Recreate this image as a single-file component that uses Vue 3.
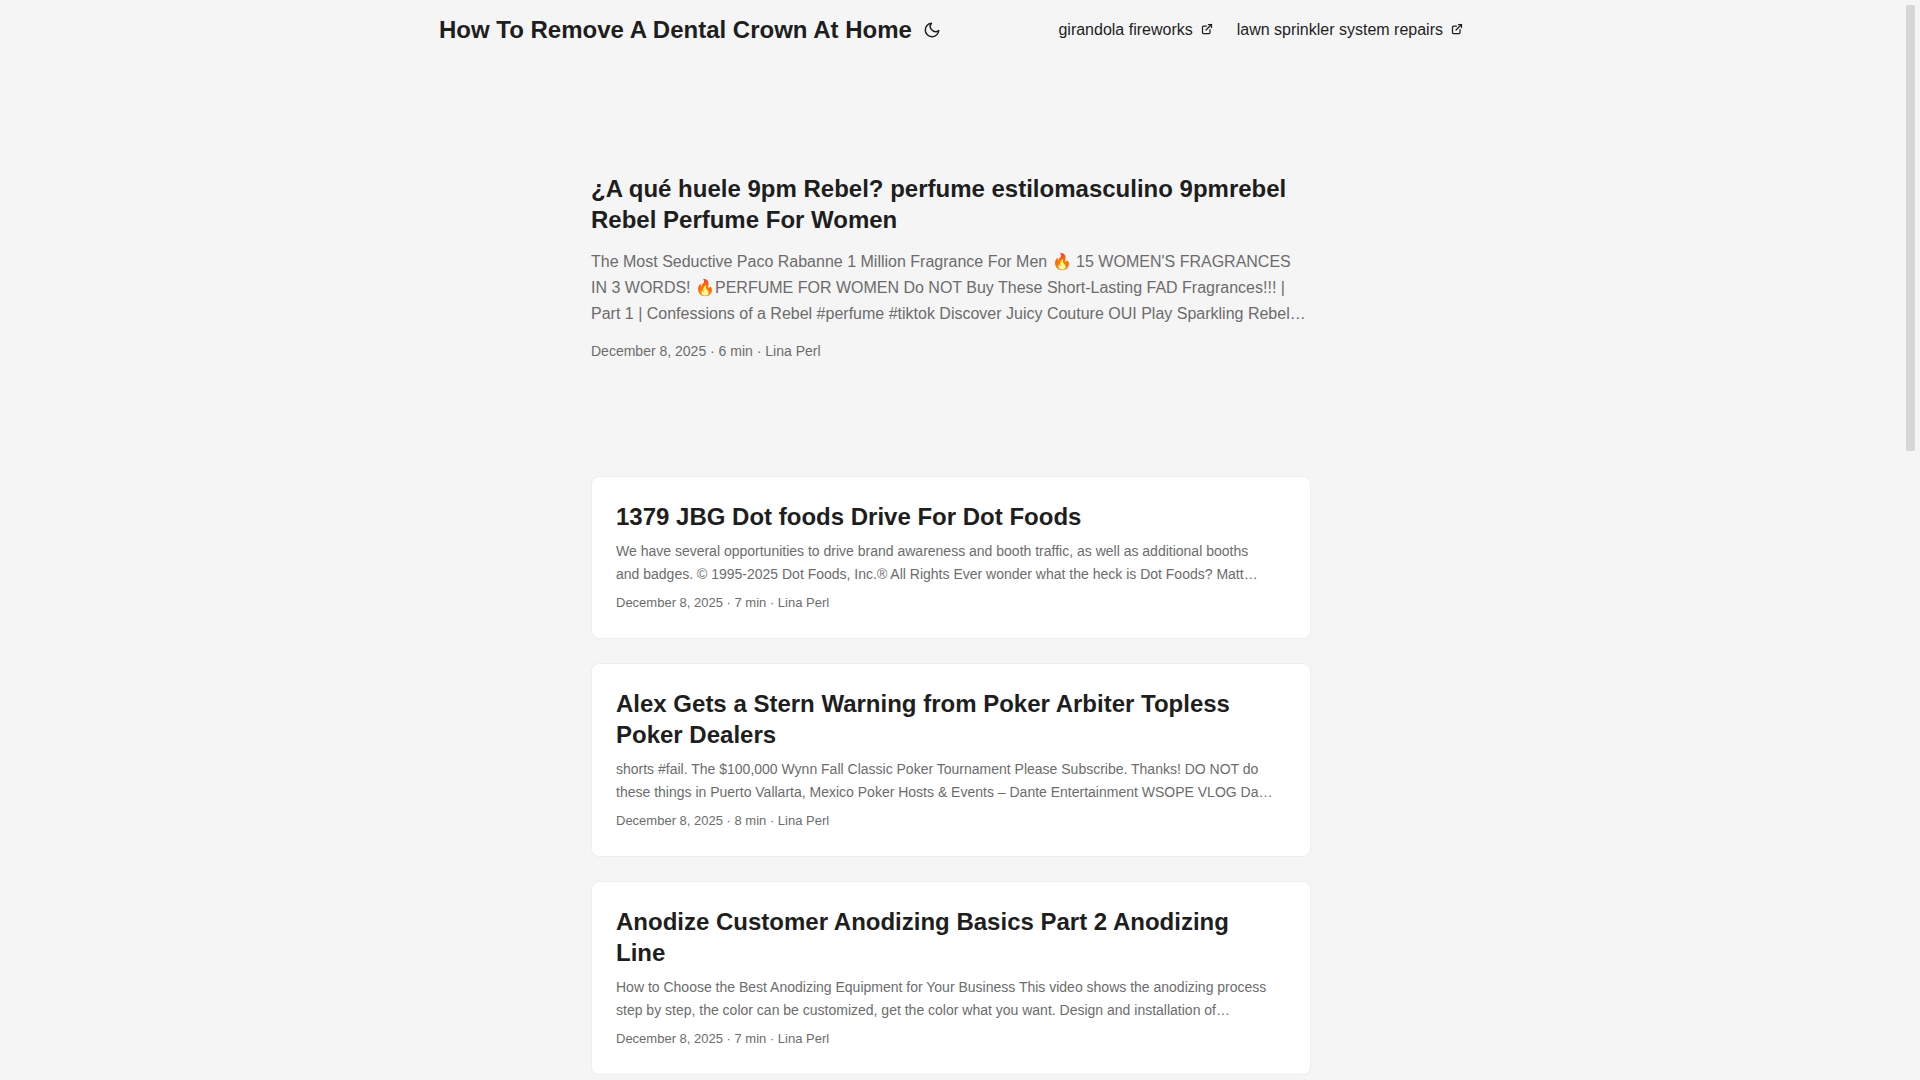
<script setup>
const menu = ['girandola fireworks', 'lawn sprinkler system repairs']

const featured = {
  title: '¿A qué huele 9pm Rebel? perfume estilomasculino 9pmrebel Rebel Perfume For Women',
  summary:
    "The Most Seductive Paco Rabanne 1 Million Fragrance For Men 🔥 15 WOMEN'S FRAGRANCES IN 3 WORDS! 🔥PERFUME FOR WOMEN Do NOT Buy These Short-Lasting FAD Fragrances!!! | Part 1 | Confessions of a Rebel #perfume #tiktok Discover Juicy Couture OUI Play Sparkling Rebel…",
  meta: 'December 8, 2025 · 6 min · Lina Perl',
}

const posts = [
  {
    title: '1379 JBG Dot foods Drive For Dot Foods',
    summary:
      'We have several opportunities to drive brand awareness and booth traffic, as well as additional booths\nand badges. © 1995-2025 Dot Foods, Inc.® All Rights Ever wonder what the heck is Dot Foods? Matt…',
    meta: 'December 8, 2025 · 7 min · Lina Perl',
  },
  {
    title: 'Alex Gets a Stern Warning from Poker Arbiter Topless Poker Dealers',
    summary:
      'shorts #fail. The $100,000 Wynn Fall Classic Poker Tournament Please Subscribe. Thanks! DO NOT do\nthese things in Puerto Vallarta, Mexico Poker Hosts & Events – Dante Entertainment WSOPE VLOG Da…',
    meta: 'December 8, 2025 · 8 min · Lina Perl',
  },
  {
    title: 'Anodize Customer Anodizing Basics Part 2 Anodizing\nLine',
    summary:
      'How to Choose the Best Anodizing Equipment for Your Business This video shows the anodizing process\nstep by step, the color can be customized, get the color what you want. Design and installation of…',
    meta: 'December 8, 2025 · 7 min · Lina Perl',
  },
]
</script>

<template>
  <div class="page">
    <header class="header">
      <nav class="nav">
        <div class="logo">
          <a href="#">How To Remove A Dental Crown At Home</a>
          <button type="button" class="theme-toggle" aria-label="Toggle theme">
            <svg width="24" height="18" viewBox="0 0 24 24" fill="none" stroke="currentColor" stroke-width="2" stroke-linecap="round" stroke-linejoin="round">
              <path d="M21 12.79A9 9 0 1 1 11.21 3 7 7 0 0 0 21 12.79z" />
            </svg>
          </button>
        </div>
        <ul class="menu">
          <li v-for="item in menu" :key="item">
            <a href="#">
              <span>{{ item }}</span>
              <svg width="12" height="12" viewBox="0 0 24 24" fill="none" stroke="currentColor" stroke-width="2.5" stroke-linecap="round" stroke-linejoin="round">
                <path d="M18 13v6a2 2 0 0 1-2 2H5a2 2 0 0 1-2-2V8a2 2 0 0 1 2-2h6" />
                <path d="M15 3h6v6" />
                <path d="M10 14L21 3" />
              </svg>
            </a>
          </li>
        </ul>
      </nav>
    </header>

    <main class="main">
      <article class="featured">
        <h1 class="title">{{ featured.title }}</h1>
        <p class="summary">{{ featured.summary }}</p>
        <footer class="meta">{{ featured.meta }}</footer>
      </article>

      <article v-for="post in posts" :key="post.title" class="card">
        <h2 class="title">{{ post.title }}</h2>
        <p class="summary">{{ post.summary }}</p>
        <footer class="meta">{{ post.meta }}</footer>
      </article>
    </main>

    <div class="scroll-thumb" aria-hidden="true"></div>
  </div>
</template>

<style>
body {
  background: #f5f5f5;
}
</style>

<style scoped>
.page {
  box-sizing: border-box;
  min-height: 100vh;
  padding-right: 18px;
  background: #f5f5f5;
  color: #1e1e1e;
  font-family: "Liberation Sans", Arial, sans-serif;
  font-size: 16px;
  text-rendering: optimizeLegibility;
}

a {
  color: inherit;
  text-decoration: none;
}

.nav {
  display: flex;
  justify-content: space-between;
  max-width: 1024px;
  margin: 0 auto;
  padding: 0 24px;
  line-height: 60px;
}

.logo {
  display: flex;
  align-items: center;
  font-size: 24px;
  font-weight: 700;
}

.theme-toggle {
  display: flex;
  margin: 0 8px;
  padding: 0;
  border: 0;
  background: none;
  color: inherit;
  cursor: pointer;
}

.menu {
  display: flex;
  gap: 24px;
  margin: 0;
  padding: 0;
  list-style: none;
}

.menu a {
  display: flex;
  align-items: center;
  gap: 8px;
}

.menu svg {
  margin-bottom: 2px;
}

.main {
  max-width: 720px;
  margin: 0 auto;
  padding: 24px 24px 0;
}

.featured {
  display: flex;
  flex-direction: column;
  justify-content: center;
  min-height: 320px;
  margin: 24px 0 48px;
}

.title {
  margin: 0;
  font-size: 24px;
  font-weight: 700;
  line-height: 31px;
  white-space: pre-line;
}

.summary {
  margin: 8px 0 6px;
  color: #6c6c6c;
  font-size: 14px;
  line-height: 23px;
  white-space: pre-line;
}

.meta {
  color: #6c6c6c;
  font-size: 13px;
  line-height: 22px;
}

.featured .summary {
  margin: 14px 0 12px;
  font-size: 16px;
  line-height: 26px;
}

.featured .meta {
  font-size: 14px;
  line-height: 24px;
}

.card {
  margin-bottom: 24px;
  padding: 24px;
  border: 1px solid #eee;
  border-radius: 8px;
  background: #fff;
}

.card:last-of-type {
  margin-bottom: 0;
}

.scroll-thumb {
  position: fixed;
  top: 5px;
  right: 5px;
  width: 9px;
  height: calc(42vh - 8px);
  border-radius: 2px;
  background: #d6d6d6;
}
</style>
